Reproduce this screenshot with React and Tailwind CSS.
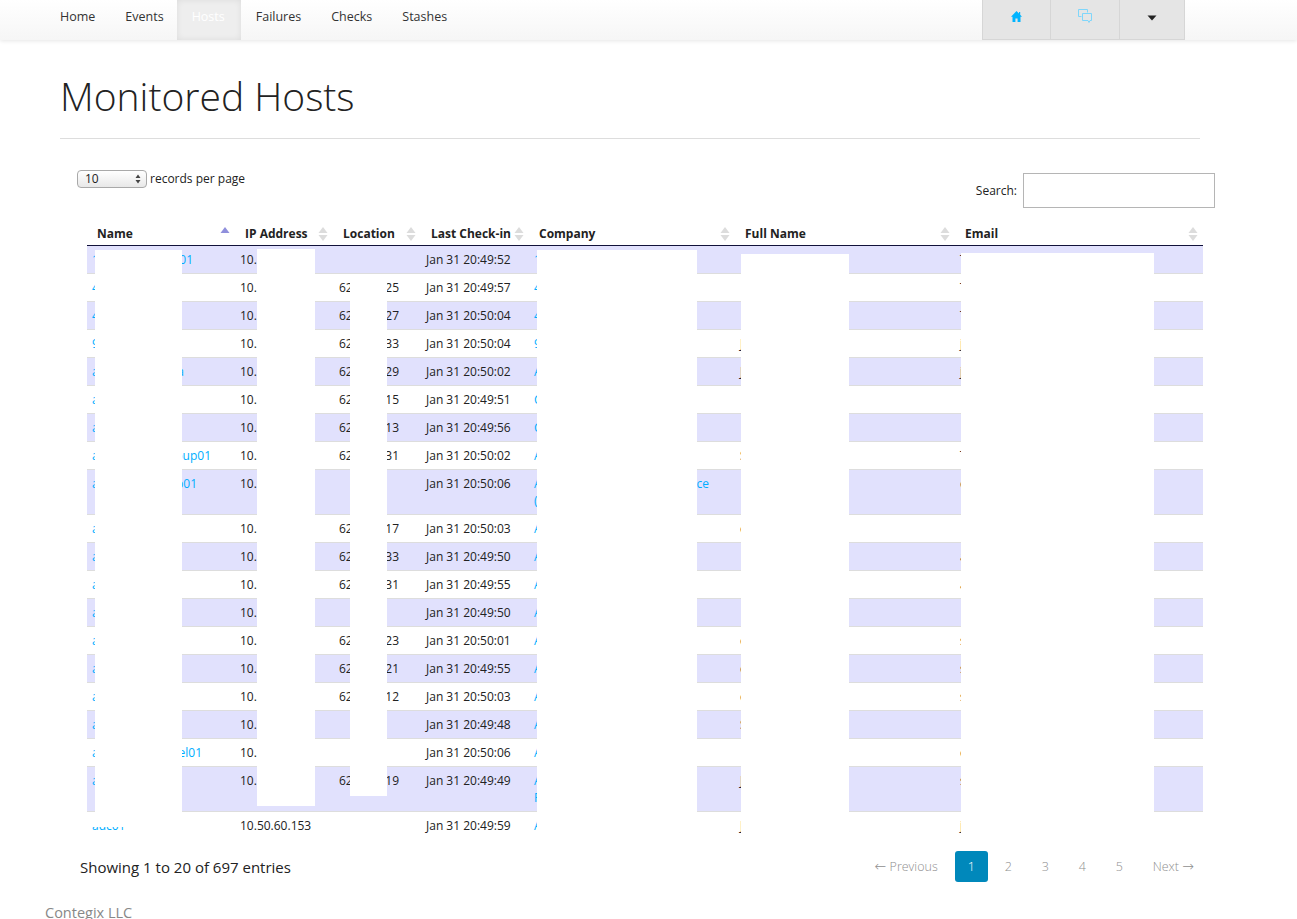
const navItems = ['Home', 'Events', 'Hosts', 'Failures', 'Checks', 'Stashes']

// first letters and tails are what the white redaction boxes leave visible
const rows = [
  { name: '1', tail: '01', tailWidth: 'w-[101px]', loc: '', time: 'Jan 31 20:49:52', company: '1', full: '', email: 'T' },
  { name: '4', loc: '25', time: 'Jan 31 20:49:57', company: '4', full: '', email: 'T' },
  { name: '4', loc: '27', time: 'Jan 31 20:50:04', company: '4', full: '', email: 'T' },
  { name: '9', loc: '33', time: 'Jan 31 20:50:04', company: '9', full: 'J', email: 'j' },
  { name: 'a', tail: 'a', tailWidth: 'w-[92px]', loc: '29', time: 'Jan 31 20:50:02', company: 'A', full: 'J', email: 'j' },
  { name: 'a', loc: '15', time: 'Jan 31 20:49:51', company: 'C', full: '', email: '' },
  { name: 'a', loc: '13', time: 'Jan 31 20:49:56', company: 'C', full: '', email: '' },
  { name: 'a', tail: 'oup01', tailWidth: 'w-[119px]', loc: '31', time: 'Jan 31 20:50:02', company: 'A', full: 'S', email: 'T' },
  { name: 'a', tail: 'p01', tailWidth: 'w-[105px]', loc: '', time: 'Jan 31 20:50:06', company: 'A', companyTail: 'ce', second: '(', full: '', email: 'c' },
  { name: 'a', loc: '17', time: 'Jan 31 20:50:03', company: 'A', full: 'c', email: '' },
  { name: 'a', loc: '33', time: 'Jan 31 20:49:50', company: 'A', full: '', email: 'a' },
  { name: 'a', loc: '31', time: 'Jan 31 20:49:55', company: 'A', full: '', email: 'a' },
  { name: 'a', loc: '', time: 'Jan 31 20:49:50', company: 'A', full: '', email: '' },
  { name: 'a', loc: '23', time: 'Jan 31 20:50:01', company: 'A', full: 'c', email: 's' },
  { name: 'a', loc: '21', time: 'Jan 31 20:49:55', company: 'A', full: 'c', email: 's' },
  { name: 'a', loc: '12', time: 'Jan 31 20:50:03', company: 'A', full: 'c', email: 's' },
  { name: 'a', loc: '', time: 'Jan 31 20:49:48', company: 'A', full: 'S', email: '' },
  { name: 'a', tail: 'el01', tailWidth: 'w-[110px]', loc: '', time: 'Jan 31 20:50:06', company: 'A', full: '', email: 'c' },
  { name: 'a', loc: '19', time: 'Jan 31 20:49:49', company: 'A', second: 'F', full: 'J', email: 's' },
  { name: 'adc01', ip: '10.50.60.153', loc: '', time: 'Jan 31 20:49:59', company: 'A', full: 'J', email: 'j' },
]

const headers = [
  { label: 'Name', width: 'w-[148px]', active: true },
  { label: 'IP Address', width: 'w-[98px]' },
  { label: 'Location', width: 'w-[88px]' },
  { label: 'Last Check-in', width: 'w-[108px]' },
  { label: 'Company', width: 'w-[206px]' },
  { label: 'Full Name', width: 'w-[220px]' },
  { label: 'Email', width: 'w-[248px]' },
]

function SortIcon({ active }) {
  return (
    <svg width="10" height="16" viewBox="0 0 10 16" className="shrink-0">
      <path d="M5 1 L9.5 7 L0.5 7 Z" fill={active ? '#8f8fdc' : '#dcdcdc'} />
      {!active && <path d="M0.5 9 L9.5 9 L5 15 Z" fill="#dcdcdc" />}
    </svg>
  )
}

function HomeIcon() {
  return (
    <svg width="11" height="11" viewBox="0 0 11 11" fill="#00b4ff">
      <path d="M5.5 0 L8 2.6 V1 H9.2 V3.8 L11 5.8 H9.5 V11 H6.6 V7.6 H4.4 V11 H1.5 V5.8 H0 Z" />
    </svg>
  )
}

function CommentsIcon() {
  return (
    <svg width="14" height="15" viewBox="0 0 14 15" fill="none" stroke="#7fd6fb" strokeWidth="1">
      <path d="M0.5 0.5 H9.5 V3.5 M3.5 7.5 H0.5 V0.5" />
      <path d="M4.5 4.5 H13.5 V11.5 H12 L11 13.5 L10 11.5 H4.5 Z" fill="#e5e5e5" />
    </svg>
  )
}

export default function App() {
  return (
    <div className="h-[919px] overflow-hidden bg-white font-['Open_Sans',sans-serif] text-xs text-[#222]">
      {/* NAV */}
      <nav className="h-10 flex justify-between pl-[45px] pr-[112px] bg-gradient-to-b from-white to-[#f6f6f6] shadow-[0_1px_4px_rgba(0,0,0,0.1)]">
        <ul className="flex">
          {navItems.map(item => (
            <li key={item} className={item === 'Hosts'
              ? '-ml-[2px] pl-[15px] pr-[16px] leading-[33px] text-[12.5px] text-white bg-[#eeeeee] shadow-[inset_0_0_6px_rgba(0,0,0,0.08)]'
              : 'px-[15px] leading-[33px] text-[12.5px] text-[#333]'}>
              {item}
            </li>
          ))}
        </ul>
        <div className="flex w-[203px] h-10 bg-[#e5e5e5] border border-t-0 border-[#d6d6d6]">
          <div className="w-[68px] flex justify-center pt-[11px] border-r border-[#d6d6d6]"><HomeIcon /></div>
          <div className="w-[69px] flex justify-center pt-[9px] border-r border-[#d6d6d6]"><CommentsIcon /></div>
          <div className="flex-1 flex justify-center pt-[15px]">
            <svg width="10" height="6" viewBox="0 0 10 6"><path d="M0.5 0.5 H9.5 L5 5.5 Z" fill="#222" /></svg>
          </div>
        </div>
      </nav>

      {/* HEADING */}
      <div className="ml-[60px] w-[1140px] mt-[26px] pb-[12px] border-b border-[#dddddd]">
        <h1 className="text-[39px] leading-[60px] font-light text-[#222]">Monitored Hosts</h1>
      </div>

      {/* FILTERS */}
      <div className="ml-[77px] w-[1138px] h-[38px] mt-[31px] flex justify-between">
        <div className="flex items-start gap-[3px]">
          <div className="w-[70px] h-[18px] flex items-center justify-between pl-[7px] pr-[5px] rounded-[4px] border border-[#a9a9a9] bg-gradient-to-b from-white to-[#e8e8e8] text-xs leading-none">
            <span>10</span>
            <svg width="6" height="10" viewBox="0 0 6 10"><path d="M3 0.5 L5.5 4 H0.5 Z M0.5 6 H5.5 L3 9.5 Z" fill="#444" /></svg>
          </div>
          <span className="leading-[18px]">records per page</span>
        </div>
        <div className="flex items-center gap-[6px] mt-[3px] h-[35px]">
          <span>Search:</span>
          <input className="w-[192px] h-[35px] border border-[#b5b5b5] bg-white" />
        </div>
      </div>

      {/* TABLE */}
      <div className="relative ml-[87px] w-[1116px] mt-[14px]">
        <table className="table-fixed w-[1116px] border-separate border-spacing-0">
          <thead>
            <tr>
              {headers.map(h => (
                <th key={h.label} className={`${h.width} h-[23px] p-0 pl-[10px] pr-[5px] text-left align-middle`}>
                  <div className="flex items-center justify-between font-bold text-xs">
                    <span>{h.label}</span>
                    <SortIcon active={h.active} />
                  </div>
                </th>
              ))}
            </tr>
          </thead>
          <tbody>
            {rows.map((r, i) => {
              const cell = `px-[5px] py-[5px] leading-[17px] align-top border-t ${i === 0 ? 'border-[#11113a]' : 'border-[#dddddd]'} ${i % 2 === 0 ? 'bg-[#e1e1fd]' : 'bg-white'}`
              return (
                <tr key={i}>
                  <td className={cell}>
                    <div className="flex justify-between text-[#00aeff]">
                      <div className={r.tail ? `flex justify-between ${r.tailWidth}` : ''}>
                        <span>{r.name}</span>
                        {r.tail && <span>{r.tail}</span>}
                      </div>
                    </div>
                  </td>
                  <td className={cell}>{r.ip || '10.'}</td>
                  <td className={cell}>
                    {r.loc && (
                      <div className="ml-px w-[60px] flex justify-between">
                        <span>62</span>
                        <span>{r.loc}</span>
                      </div>
                    )}
                  </td>
                  <td className={cell}>{r.time}</td>
                  <td className={`${cell} text-[#00aeff]`}>
                    <div className={r.companyTail ? 'w-[175px] flex justify-between' : ''}>
                      <span>{r.company}</span>
                      {r.companyTail && <span>{r.companyTail}</span>}
                    </div>
                    {r.second && <div>{r.second}</div>}
                  </td>
                  <td className={cell}>{r.full}</td>
                  <td className={cell}>{r.email}</td>
                </tr>
              )
            })}
          </tbody>
        </table>

        {/* Redaction boxes painted over the table */}
        <div className="absolute left-[8px] top-[28px] w-[87px] h-[562px] bg-white" />
        <div className="absolute left-0 top-[590px] w-[40px] h-[15px] bg-white" />
        <div className="absolute left-[170px] top-[27px] w-[58px] h-[557px] bg-white" />
        <div className="absolute left-[263px] top-[52px] w-[37px] h-[522px] bg-white" />
        <div className="absolute left-[450px] top-[28px] w-[160px] h-[589px] bg-white" />
        <div className="absolute left-[654px] top-[32px] w-[108px] h-[585px] bg-white" />
        <div className="absolute left-[874px] top-[31px] w-[193px] h-[586px] bg-white" />
      </div>

      {/* INFO + PAGINATION */}
      <div className="ml-[80px] w-[1127px] mt-[12px] flex justify-between items-center">
        <span className="text-[15px] text-[#222]">Showing 1 to 20 of 697 entries</span>
        <div className="flex gap-1 text-[12.5px] font-light text-[#8f8f8f] leading-[31px]">
          <span className="px-[13px]"><span className="text-sm font-['DejaVu_Sans',sans-serif]">←</span> Previous</span>
          <span className="w-[33px] text-center rounded-[3px] bg-[#0088bb] text-white">1</span>
          <span className="w-[33px] text-center">2</span>
          <span className="w-[33px] text-center">3</span>
          <span className="w-[33px] text-center">4</span>
          <span className="w-[33px] text-center">5</span>
          <span className="px-[13px]">Next <span className="text-sm font-['DejaVu_Sans',sans-serif]">→</span></span>
        </div>
      </div>

      {/* FOOTER */}
      <p className="ml-[45px] mt-[21px] text-[14.5px] text-[#888]">Contegix LLC</p>
    </div>
  )
}
